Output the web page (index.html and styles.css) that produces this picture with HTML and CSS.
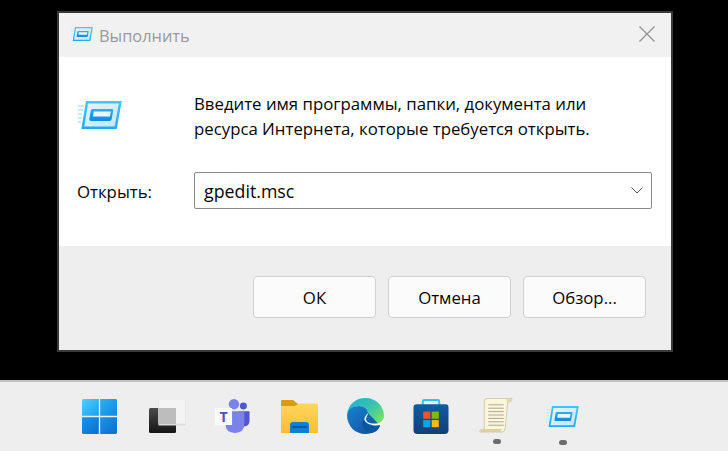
FILE: index.html
```html
<!DOCTYPE html>
<html lang="ru">
<head>
<meta charset="utf-8">
<title>Выполнить</title>
<link rel="stylesheet" href="styles.css">
</head>
<body>
<svg class="defs" width="0" height="0" aria-hidden="true">
  <defs>
    <linearGradient id="runFace" x1="0" y1="0" x2="1" y2="1"><stop offset="0" stop-color="#e6f4fd"/><stop offset="1" stop-color="#c4e5fb"/></linearGradient>
    <linearGradient id="runEdge" x1="0" y1="0" x2="0" y2="1"><stop offset="0" stop-color="#3cc8f8"/><stop offset="1" stop-color="#28a8f0"/></linearGradient>
    <linearGradient id="runBtn" x1="0" y1="0" x2="0" y2="1"><stop offset="0" stop-color="#2eaef0"/><stop offset="1" stop-color="#1488dd"/></linearGradient>
    <symbol id="run" viewBox="0 0 44 28">
      <path d="M0 5h6M0 9h5M0 13h4M0 17h4M0 21h3" stroke="#c8eafc" stroke-width="1.800"/>
      <path d="M9 1.300H42.300L37.700 26.700H4.800Z" fill="url(#runFace)" stroke="url(#runEdge)" stroke-width="2.400"/>
      <path d="M14.500 8H34Q35.500 8 35.200 9.500L33.700 18Q33.400 20 31.500 20H13Q11 20 11.300 18L12.800 9.500Q13 8 14.500 8Z" fill="url(#runBtn)"/>
      <path d="M15.800 10.500H32.800L32 15.500H15Z" fill="#e9f6fe"/>
    </symbol>
    <linearGradient id="winTL" x1="0" y1="0" x2="1" y2="1"><stop offset="0" stop-color="#4fd0fb"/><stop offset="1" stop-color="#1a9ff0"/></linearGradient>
    <linearGradient id="winTR" x1="0" y1="0" x2="1" y2="1"><stop offset="0" stop-color="#2ab0f2"/><stop offset="1" stop-color="#0f8ae6"/></linearGradient>
    <linearGradient id="winB" x1="0" y1="0" x2="1" y2="1"><stop offset="0" stop-color="#1a94ea"/><stop offset="1" stop-color="#0a6fd0"/></linearGradient>
    <linearGradient id="tvDark" x1="0" y1="0" x2="0" y2="1"><stop offset="0" stop-color="#4a4a4a"/><stop offset="1" stop-color="#161616"/></linearGradient>
    <linearGradient id="folder" x1="0" y1="0" x2="0" y2="1"><stop offset="0" stop-color="#ffd75e"/><stop offset="1" stop-color="#fbbd2d"/></linearGradient>
    <linearGradient id="edgeG" x1="0.100" y1="0" x2="1" y2="0.700"><stop offset="0" stop-color="#21b3d6"/><stop offset="0.550" stop-color="#35c2b0"/><stop offset="1" stop-color="#6fe06a"/></linearGradient>
    <linearGradient id="edgeB" x1="0" y1="0" x2="1" y2="1"><stop offset="0" stop-color="#1a83d1"/><stop offset="1" stop-color="#0c4d9c"/></linearGradient>
    <linearGradient id="store" x1="0" y1="0" x2="0" y2="1"><stop offset="0" stop-color="#0f5da3"/><stop offset="1" stop-color="#123f78"/></linearGradient>
  </defs>
</svg>

<main class="desktop">
  <section class="dialog">
    <header class="titlebar">
      <svg class="title-icon"><use href="#run"/></svg>
      <span class="title-text">Выполнить</span>
      <svg class="close" viewBox="0 0 16 16"><path d="M.5.500 15.500 15.500M15.500.500 .5 15.500" stroke="#929292" stroke-width="1.300" fill="none"/></svg>
    </header>
    <div class="content">
      <div class="intro">
        <svg class="big-icon"><use href="#run"/></svg>
        <p class="message">Введите имя программы, папки, документа или<br>ресурса Интернета, которые требуется открыть.</p>
      </div>
      <div class="open-row">
        <label class="open-label">Открыть:</label>
        <div class="combo">
          <span class="combo-value">gpedit.msc</span>
          <svg class="chevron" viewBox="0 0 12 7"><path d="M.5.500 6 6 11.500.500" stroke="#555" stroke-width="1" fill="none"/></svg>
        </div>
      </div>
    </div>
    <footer class="actions">
      <button class="btn">ОК</button>
      <button class="btn">Отмена</button>
      <button class="btn">Обзор...</button>
    </footer>
  </section>
</main>

<nav class="taskbar">
  <div class="slot slot-start">
    <svg width="35" height="35" viewBox="0 0 36 36">
      <path d="M1.500 0H17.300V17.300H0V1.500Q0 0 1.500 0Z" fill="url(#winTL)"/>
      <path d="M18.700 0H34.500Q36 0 36 1.500V17.300H18.700Z" fill="url(#winTR)"/>
      <path d="M0 18.700H17.300V36H1.500Q0 36 0 34.500Z" fill="url(#winB)"/>
      <path d="M18.700 18.700H36V34.500Q36 36 34.500 36H18.700Z" fill="url(#winB)"/>
    </svg>
  </div>
  <div class="slot">
    <svg width="37" height="36" viewBox="0 0 37 36">
      <rect x="0" y="9" width="27" height="25" rx="1.500" fill="url(#tvDark)"/>
      <rect x="9.500" y="0" width="27" height="25" rx="1" fill="#f4f4f4" stroke="#e2e2e2" stroke-width=".6"/>
      <rect x="9.500" y="9" width="17.500" height="16" fill="#bdbdbd"/>
      <rect x="9.500" y="25" width="27" height="1.500" fill="#dcdcdc"/>
    </svg>
  </div>
  <div class="slot">
    <svg width="38" height="34" viewBox="0 0 38 36">
      <circle cx="30" cy="7.500" r="3.700" fill="#5059c9"/>
      <path d="M24.500 13H35.500Q36.500 13 36.500 14V23Q36.500 29 30.500 29Q24.500 29 24.500 23Z" fill="#5059c9"/>
      <circle cx="20" cy="5.500" r="5.500" fill="#7b83eb"/>
      <path d="M11 13H31V26Q31 36 21 36Q11 36 11 26Z" fill="#7b83eb"/>
      <rect x="0" y="9.500" width="18" height="18" fill="#fbfbfd"/>
      <text class="teams-t" x="9" y="24">T</text>
    </svg>
  </div>
  <div class="slot">
    <svg class="down-1" width="37" height="33" viewBox="0 0 37 33">
      <path d="M1 0H12L17 4H36Q37 4 37 5V10H0V1Q0 0 1 0Z" fill="#d99c0e"/>
      <path d="M0 6H14L18 3.500H36Q37 3.500 37 4.500V32Q37 33 36 33H1Q0 33 0 32Z" fill="url(#folder)"/>
      <path d="M9 33V25Q9 22 12 22H25Q28 22 28 25V33Z" fill="#0f7fd6"/>
      <path d="M11 27H26" stroke="#0a4f96" stroke-width="1.500"/>
    </svg>
  </div>
  <div class="slot">
    <svg class="up-1" width="37" height="36" viewBox="0 0 37 36">
      <path d="M0 17C1 6 9 0 18.500 0C29 0 37 8 37 18C37 23 33 25.500 27 25.500C22.500 25.500 19 24 19 21C19 19 21 18 21 15C21 10 16 8 12 8C6 8 1 12 0 17Z" fill="url(#edgeG)"/>
      <path d="M0 17C1 11 6 8 12 8C17 8 21 11 21 15L33 27.500C31 32 26 36 18.500 36C8 36 0 28 0 17Z" fill="url(#edgeB)"/>
      <path d="M15 25C15 30 19 34 25 35C29 34 31 32 33 28C27 29 20 28 17 22C15.500 23 15 24 15 25Z" fill="#0b549f"/>
      <path d="M21 15C19 17 17 19.500 17.500 22C19.500 26.500 28 29 34 26.500C36 25.500 37 22.500 37 20C36 23.500 32 25.500 27 25.500C22.500 25.500 19 24 19 21C19 19 21 17 21 15Z" fill="#fafdfc"/>
    </svg>
  </div>
  <div class="slot">
    <svg width="36" height="35" viewBox="0 0 36 36">
      <path d="M9.500 7V2.500Q9.500 1 11 1H25Q26.500 1 26.500 2.500V7" fill="none" stroke="#2cc4f4" stroke-width="2"/>
      <path d="M3 5.500H33Q36 5.500 36 8.500V32Q36 36 32 36H4Q0 36 0 32V8.500Q0 5.500 3 5.500Z" fill="url(#store)"/>
      <rect x="10" y="13" width="7.300" height="7.300" fill="#f25325"/>
      <rect x="18.700" y="13" width="7.300" height="7.300" fill="#80bb03"/>
      <rect x="10" y="21.700" width="7.300" height="7.300" fill="#04a6f0"/>
      <rect x="18.700" y="21.700" width="7.300" height="7.300" fill="#ffba04"/>
    </svg>
  </div>
  <div class="slot">
    <svg class="scroll" width="34" height="36" viewBox="0 0 34 36">
      <path d="M5 3Q5 .5 8 .5H33.500L32 4H29L26.500 31Q26 35 23 35H1Q0 35 .5 33.500Q1 32 3 32H5Z" fill="#fbf6da" stroke="#c9c09a" stroke-width=".8"/>
      <path d="M29 4.500Q27 2 28 .5H32Q33.500 .5 33 3Z" fill="#e3d9ab"/>
      <path d="M9 7H25M9 10.500H25M9 14H25M9 17.500H25M9 21H25M9 24.500H25M9 28H25" stroke="#a8a595" stroke-width="1"/>
      <path d="M1 33.500Q4 31.500 8 32H24Q21 33 22 35H2Q.5 35 1 33.500Z" fill="#dccf99"/>
    </svg>
    <span class="dot"></span>
  </div>
  <div class="slot">
    <svg class="task-run"><use href="#run"/></svg>
    <span class="dot"></span>
  </div>
</nav>
</body>
</html>
```
FILE: styles.css
```css
* { box-sizing: border-box; }
html, body { margin: 0; height: 100%; }
body {
  width: 728px;
  height: 451px;
  overflow: hidden;
  background: #000;
  font-family: "Open Sans", "Noto Sans", sans-serif;
  font-size: 16.8px;
  color: #050505;
  display: flex;
  flex-direction: column;
}
.defs { position: absolute; }
.desktop { height: 380px; padding: 11px 0 0 57px; }
.dialog {
  width: 616px;
  height: 341px;
  border: 2px solid #3a3a3a;
  background: #fff;
  display: flex;
  flex-direction: column;
}
.titlebar {
  height: 44px;
  flex: none;
  background: #f1f1f1;
  display: flex;
  align-items: center;
  padding: 0 16px 0 12px;
}
.title-icon { width: 22px; height: 14px; margin: 0 6px 2px 0; }
.title-text { flex: 1; color: #999; font-size: 16.4px; }
.close { width: 16px; height: 16px; margin-bottom: 2px; }
.content { height: 189px; flex: none; padding: 0 19px 0 18px; }
.intro { display: flex; height: 115px; padding-top: 34px; }
.big-icon { width: 44px; height: 28px; margin: 10px 72px 0 1px; flex: none; }
.message { margin: 0; line-height: 25px; white-space: nowrap; }
.open-row { display: flex; align-items: center; height: 37px; }
.open-label { width: 117px; flex: none; margin-top: 2px; }
.combo {
  width: 458px;
  height: 37px;
  border: 1px solid #8a8a8a;
  border-radius: 2px;
  display: flex;
  align-items: center;
  justify-content: space-between;
  padding: 0 8px 0 9px;
}
.combo-value { font-size: 17.8px; }
.chevron { width: 12px; height: 7px; }
.actions {
  flex: 1;
  background: #eee;
  display: flex;
  gap: 12px;
  padding: 30px 25px 0 194px;
}
.btn {
  width: 123px;
  height: 42px;
  background: #fbfbfb;
  border: 1px solid #d0d0d0;
  border-radius: 4px;
  font: inherit;
  color: inherit;
  padding: 0;
}
.taskbar {
  flex: 1;
  background: #eee;
  border-top: 2px solid #c2c2c2;
  display: flex;
  padding: 17px 0 0 66px;
}
.slot {
  width: 66px;
  height: 52px;
  display: flex;
  flex-direction: column;
  align-items: center;
}
.slot-start { width: 67px; margin-right: 1px; }
.down-1 { margin-top: 1px; }
.up-1 { margin-top: -1px; }
.scroll { flex: none; margin: -1px 2px 6px 0; height: 35px; }
.dot { width: 8px; height: 5px; border-radius: 3px; background: #6c6c6c; flex: none; }
.task-run { width: 33px; height: 21px; margin: 7px 2px 13px 0; flex: none; }
.teams-t { font: 700 15px "Open Sans", sans-serif; fill: #4b53bc; text-anchor: middle; }
```
